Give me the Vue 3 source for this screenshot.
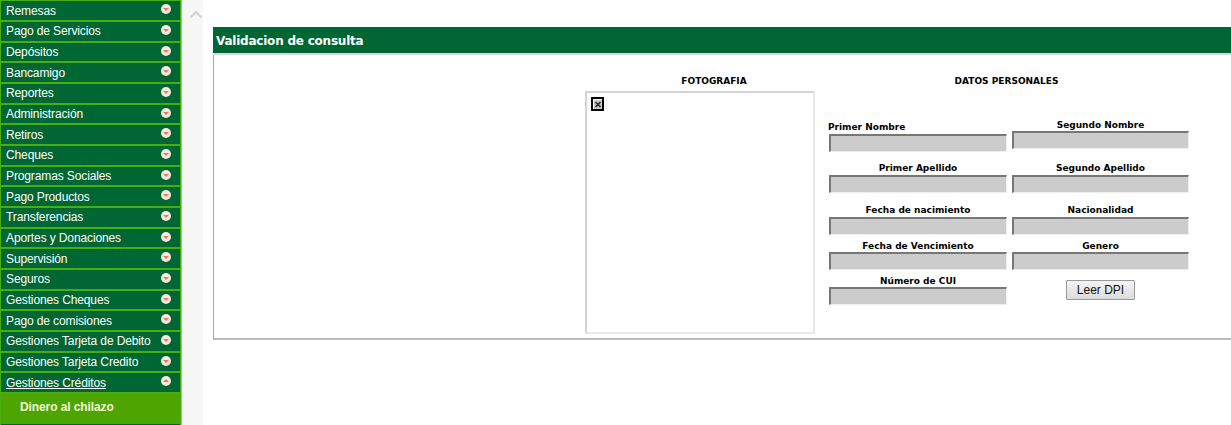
<template>
  <div class="page">
    <aside class="sidebar">
      <div v-for="item in menu" :key="item" class="menu-item">
        <span :class="{ active: item === openItem }">{{ item }}</span>
        <i class="bullet" :class="{ open: item === openItem }"></i>
      </div>
      <div class="submenu">Dinero al chilazo</div>
      <div class="menu-item"><i class="bullet"></i></div>
    </aside>

    <div class="strip">
      <svg class="chevron" width="14" height="9" viewBox="0 0 14 9">
        <path d="M1.5 7.5 L7 2 L12.5 7.5" fill="none" stroke="#d3d3d3" stroke-width="2" />
      </svg>
    </div>

    <main class="content">
      <section class="panel">
        <h2 class="panel-title">Validacion de consulta</h2>
        <div class="panel-body">
          <div class="photo-col">
            <h3 class="col-title photo-title">FOTOGRAFIA</h3>
            <div class="photo-box">
              <span class="broken-img">
                <svg width="8" height="9" viewBox="0 0 8 9">
                  <rect width="8" height="9" fill="#c8c8c8" />
                  <path d="M1.5 2 L6.5 7 M6.5 2 L1.5 7" stroke="#222" stroke-width="1.5" />
                </svg>
              </span>
            </div>
          </div>

          <div class="data-col">
            <h3 class="col-title data-title">DATOS PERSONALES</h3>
            <div class="row row-name">
              <div class="field first-name"><label class="left">Primer Nombre</label><input disabled /></div>
              <div class="field second-field"><label>Segundo Nombre</label><input disabled class="second-name" /></div>
            </div>
            <div class="row row-surname">
              <div class="field"><label>Primer Apellido</label><input disabled /></div>
              <div class="field"><label>Segundo Apellido</label><input disabled /></div>
            </div>
            <div class="row row-birth">
              <div class="field"><label>Fecha de nacimiento</label><input disabled /></div>
              <div class="field"><label>Nacionalidad</label><input disabled /></div>
            </div>
            <div class="row row-expiry">
              <div class="field"><label>Fecha de Vencimiento</label><input disabled /></div>
              <div class="field"><label>Genero</label><input disabled /></div>
            </div>
            <div class="row row-cui">
              <div class="field"><label>Número de CUI</label><input disabled /></div>
              <div class="field button-cell"><button type="button" class="btn-read">Leer DPI</button></div>
            </div>
          </div>
        </div>
      </section>
    </main>
  </div>
</template>

<script setup>
const openItem = 'Gestiones Créditos'
const menu = [
  'Remesas',
  'Pago de Servicios',
  'Depósitos',
  'Bancamigo',
  'Reportes',
  'Administración',
  'Retiros',
  'Cheques',
  'Programas Sociales',
  'Pago Productos',
  'Transferencias',
  'Aportes y Donaciones',
  'Supervisión',
  'Seguros',
  'Gestiones Cheques',
  'Pago de comisiones',
  'Gestiones Tarjeta de Debito',
  'Gestiones Tarjeta Credito',
  'Gestiones Créditos'
]
</script>

<style>
html, body {
  margin: 0;
  background: #fff;
  overflow: hidden;
}
</style>

<style scoped>
.page {
  display: flex;
  height: 425px;
  overflow: hidden;
  background: #fff;
}

.sidebar {
  flex: 0 0 182px;
  box-sizing: border-box;
  height: 425px;
  overflow: hidden;
  background: #46ae10;
  padding: 1.35px 1px 0 1px;
  border-right: 1px solid #86d455;
  font-family: "Liberation Sans", Arial, sans-serif;
  font-size: 12px;
  letter-spacing: -0.12px;
}

.menu-item {
  box-sizing: border-box;
  height: 20.68px;
  flex-shrink: 0;
  padding-left: 5px;
  background: #006633;
  border-bottom: 2px solid #46ae10;
  color: #fff;
  display: flex;
  align-items: center;
  line-height: 18px;
  position: relative;
}

.active {
  text-decoration: underline;
}

.bullet {
  position: absolute;
  left: 160px;
  top: 3px;
  width: 10px;
  height: 10px;
  border-radius: 50%;
  background: radial-gradient(circle at 50% 45%, #f8ece0 45%, #e6dccb 100%);
}

.bullet::after {
  content: "";
  position: absolute;
  left: 2px;
  top: 4px;
  border-left: 3px solid transparent;
  border-right: 3px solid transparent;
  border-top: 3px solid #ea7a5c;
}

.bullet.open::after {
  top: 3px;
  border-top: none;
  border-bottom: 3px solid #ea7a5c;
}

.submenu {
  box-sizing: border-box;
  height: 30.5px;
  margin-top: -1px;
  padding-left: 19px;
  background: #4fa500;
  color: #eef8dc;
  font-weight: bold;
  line-height: 29px;
  letter-spacing: -0.1px;
}

.strip {
  flex: 0 0 21px;
  background: #f7f7f7;
  position: relative;
}

.chevron {
  position: absolute;
  left: 7px;
  top: 10px;
}

.content {
  flex: 1;
  min-width: 0;
  padding: 27px 0 0 10px;
}

.panel {
  height: 313px;
  box-sizing: border-box;
  border-left: 1px solid #aaa;
  border-bottom: 2px solid #bbb;
}

.panel-title {
  margin: 0 0 0 -1px;
  height: 26px;
  padding-left: 3px;
  background: #006633;
  color: #fff;
  font: bold 12px/28px "DejaVu Sans", Verdana, sans-serif;
  letter-spacing: -0.22px;
  border-bottom: 2px solid #d8d8d8;
  box-sizing: content-box;
}

.panel-body {
  display: flex;
  padding-left: 371px;
  font-family: "DejaVu Sans", Verdana, sans-serif;
}

.col-title {
  margin: 0;
  font-size: 9px;
  font-weight: bold;
  color: #000;
  text-align: center;
  line-height: 12px;
}

.photo-col {
  width: 230px;
  flex-shrink: 0;
}

.photo-title {
  padding: 20px 0 0 28px;
}

.photo-box {
  box-sizing: border-box;
  height: 243px;
  margin-top: 4px;
  border: 2px solid #e8e8e8;
  border-top-color: #d4d4d4;
  border-left-color: #d4d4d4;
  padding: 4px 4px;
}

.broken-img {
  display: flex;
  width: 13px;
  height: 14px;
  box-sizing: border-box;
  border: 2px solid #000;
  background: #fff;
  align-items: center;
  justify-content: center;
}

.data-col {
  width: 360px;
  margin-left: 14px;
}

.data-title {
  padding-top: 20px;
  padding-right: 5px;
}

.row {
  display: grid;
  grid-template-columns: 178px 177px;
  column-gap: 5px;
}

.row-name { margin-top: 31px; height: 44px; }
.row-surname { height: 41px; margin-top: 0; }
.row-birth { height: 36px; margin-top: 1px; }
.row-expiry { height: 35px; margin-top: 0; }
.row-cui { margin-top: 0; }

.field {
  display: flex;
  flex-direction: column;
}

.field label {
  font-size: 9px;
  font-weight: bold;
  color: #000;
  text-align: center;
  line-height: 12px;
  height: 13px;
}

.field label.left {
  text-align: left;
  margin-left: -1px;
}

.first-name {
  padding-top: 3px;
}

.second-field {
  padding-top: 1px;
}

.second-field label {
  height: 12px;
}

.second-name {
  height: 19px;
}

.field input {
  box-sizing: border-box;
  width: 100%;
  height: 18px;
  margin: 0;
  padding: 0;
  background: #ccc;
  border: 1px solid #eee;
  border-top: 2px solid #777;
  border-left: 2px solid #777;
}

.row-expiry .field input,
.row-cui .field input {
  margin-top: -1px;
}

.button-cell {
  align-items: center;
  padding-top: 5px;
  padding-right: 0;
}

.btn-read {
  box-sizing: border-box;
  width: 69px;
  height: 20px;
  padding: 0;
  background: linear-gradient(#f4f4f4, #dcdcdc);
  border: 1px solid #999;
  border-radius: 1px;
  color: #111;
  font: 12px "Liberation Sans", Arial, sans-serif;
}
</style>
